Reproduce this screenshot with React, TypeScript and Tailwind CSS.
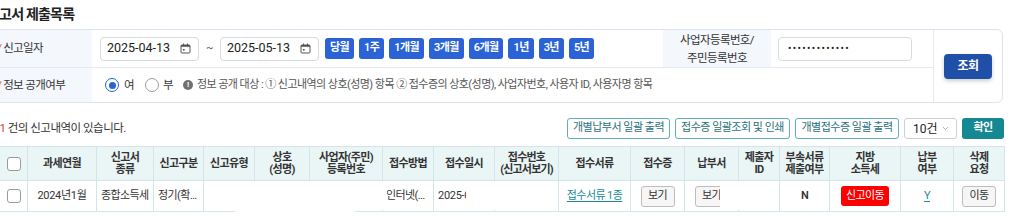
import React from "react";
import { ChevronDown } from "lucide-react";

function CalendarIcon() {
  return (
    <svg width="11" height="11" viewBox="0 0 11 11" className="shrink-0">
      <rect x="1" y="2" width="9" height="8" rx="1" fill="none" stroke="#555" strokeWidth="1" />
      <rect x="1" y="2" width="9" height="1.8" fill="#555" />
      <line x1="3.5" y1="0.5" x2="3.5" y2="2.5" stroke="#555" strokeWidth="1" />
      <line x1="7.5" y1="0.5" x2="7.5" y2="2.5" stroke="#555" strokeWidth="1" />
      <rect x="3" y="6" width="1.6" height="1.6" fill="#555" />
    </svg>
  );
}

function DateInput({ value }: { value: string }) {
  return (
    <div className="flex h-[24px] w-[99px] items-center justify-between rounded-[4px] border border-[#d6dae1] bg-white pl-[6px] pr-[7px] text-[12.5px] tracking-normal text-[#222]">
      <span>{value}</span>
      <CalendarIcon />
    </div>
  );
}

function PeriodBtn({ label }: { label: string }) {
  return (
    <button className="flex h-[21px] items-center rounded-[3px] bg-[#2b63d6] px-[5px] text-[11px] font-semibold tracking-[-0.6px] text-white">
      {label}
    </button>
  );
}

function OutlineBtn({ label, w }: { label: string; w: string }) {
  return (
    <button
      className={`flex h-[21px] items-center justify-center rounded-[3px] border border-[#5eafb7] bg-white text-[11px] tracking-[-0.5px] text-[#2c6f78] ${w}`}
    >
      {label}
    </button>
  );
}

function Checkbox() {
  return <span className="inline-block h-[14px] w-[14px] rounded-[3px] border border-[#9a9a9a] bg-white align-middle" />;
}

function GrayBtn({ label }: { label: string }) {
  return (
    <button className="inline-flex h-[21px] w-[34px] items-center justify-center rounded-[3px] border border-[#bdbdbd] bg-[#f6f6f6] text-[11px] text-[#333]">
      {label}
    </button>
  );
}

export default function App() {
  const th = "border border-[#d3e5e8] p-0 text-center font-bold text-[#333] leading-[12px]";
  const td = "border border-[#d3e5e8] p-0 text-center text-[#333]";
  return (
    <div className="h-[220px] w-[1024px] overflow-hidden bg-white font-['Roboto','Noto_Sans_CJK_KR',sans-serif] text-[11px] tracking-[-0.6px] text-[#333]">
      <div className="-ml-[13px] w-[1017px]">
        {/* Title */}
        <div className="flex h-[29px] items-center text-[14px] font-bold tracking-[-0.8px] text-[#222]">신고서 제출목록</div>

        {/* Search box */}
        <div className="flex h-[74px] w-[1016px] rounded-[6px] border border-[#dde4ef]">
          <div className="flex flex-1 flex-col">
            <div className="flex h-[39px] border-b border-[#e4e9f2]">
              <div className="flex w-[104px] items-center rounded-tl-[5px] bg-[#f4f7fc] pl-[9px]">
                <span className="mr-[2px] text-[#e5485d]">*</span>
                <span className="text-[11.5px] text-[#333]">신고일자</span>
              </div>
              <div className="flex w-[571px] items-center pl-[8px]">
                <DateInput value="2025-04-13" />
                <span className="mx-[6px] w-[9px] text-center text-[#555]">~</span>
                <DateInput value="2025-05-13" />
                <div className="ml-[6px] flex gap-[5px]">
                  <PeriodBtn label="당월" />
                  <PeriodBtn label="1주" />
                  <PeriodBtn label="1개월" />
                  <PeriodBtn label="3개월" />
                  <PeriodBtn label="6개월" />
                  <PeriodBtn label="1년" />
                  <PeriodBtn label="3년" />
                  <PeriodBtn label="5년" />
                </div>
              </div>
              <div className="flex w-[108px] items-center justify-center bg-[#f4f7fc] text-center text-[11.5px] leading-[18px] text-[#333]">
                사업자등록번호/
                <br />
                주민등록번호
              </div>
              <div className="flex w-[162px] items-center pl-[7px]">
                <div className="flex h-[24px] w-[134px] items-center rounded-[4px] border border-[#d6dae1] bg-white pl-[9px] text-[10px] tracking-[1.4px] text-[#222]">
                  •••••••••••••
                </div>
              </div>
            </div>
            <div className="flex h-[34px]">
              <div className="flex w-[104px] items-center rounded-bl-[5px] bg-[#f4f7fc] pl-[9px]">
                <span className="mr-[2px] text-[#e5485d]">*</span>
                <span className="text-[11.5px] text-[#333]">정보 공개여부</span>
              </div>
              <div className="flex flex-1 items-center pl-[13px]">
                <span className="flex h-[14px] w-[14px] items-center justify-center rounded-full border border-[#2b63d6] bg-white">
                  <span className="h-[7px] w-[7px] rounded-full bg-[#2b63d6]" />
                </span>
                <span className="ml-[5px] text-[11.5px]">여</span>
                <span className="ml-[11px] h-[14px] w-[14px] rounded-full border border-[#9c9c9c] bg-white" />
                <span className="ml-[4px] text-[11.5px]">부</span>
                <span className="ml-[10px] flex h-[10px] w-[10px] items-center justify-center rounded-full bg-[#707070] text-[8px] font-bold leading-none tracking-normal text-white">
                  !
                </span>
                <span className="ml-[4px] tracking-[-0.55px] text-[#555]">
                  정보 공개 대상 : ① 신고내역의 상호(성명) 항목 ② 접수증의 상호(성명), 사업자번호, 사용자 ID, 사용자명 항목
                </span>
              </div>
            </div>
          </div>
          <div className="flex w-[70px] items-center justify-center border-l border-[#e4e9f2]">
            <button className="flex h-[25px] w-[48px] items-center justify-center rounded-[4px] bg-[#1f4fa6] text-[12px] font-semibold text-white shadow-[0_2px_4px_rgba(0,0,0,0.2)]">
              조회
            </button>
          </div>
        </div>

        {/* Result bar */}
        <div className="mt-[15px] flex h-[21px] items-center justify-between">
          <div className="text-[11.5px] tracking-[-0.5px] text-[#333]">
            총 <span className="text-[#e53935]">1</span> 건의 신고내역이 있습니다.
          </div>
          <div className="flex items-center gap-[5px]">
            <OutlineBtn label="개별납부서 일괄 출력" w="w-[103px]" />
            <OutlineBtn label="접수증 일괄조회 및 인쇄" w="w-[115px]" />
            <OutlineBtn label="개별접수증 일괄 출력" w="w-[104px]" />
            <div className="flex h-[21px] w-[53px] items-center justify-between rounded-[3px] border border-[#cfcfcf] bg-white pl-[8px] pr-[6px] text-[12px] tracking-normal text-[#222]">
              <span>10건</span>
              <ChevronDown size={9} color="#888" strokeWidth={2} />
            </div>
            <button className="flex h-[21px] w-[42px] items-center justify-center rounded-[3px] bg-[#148893] text-[11px] font-semibold text-white">
              확인
            </button>
          </div>
        </div>

        {/* Table */}
        <div className="relative mt-[7px]">
          <table className="w-[1017px] table-fixed border-collapse">
            <colgroup>
              <col className="w-[40px]" />
              <col className="w-[69px]" />
              <col className="w-[57px]" />
              <col className="w-[50px]" />
              <col className="w-[51px]" />
              <col className="w-[55px]" />
              <col className="w-[73px]" />
              <col className="w-[51px]" />
              <col className="w-[61px]" />
              <col className="w-[64px]" />
              <col className="w-[72px]" />
              <col className="w-[54px]" />
              <col className="w-[54px]" />
              <col className="w-[41px]" />
              <col className="w-[50px]" />
              <col className="w-[71px]" />
              <col className="w-[53px]" />
              <col className="w-[51px]" />
            </colgroup>
            <thead>
              <tr className="h-[34px] bg-[#eaf5f6]">
                <th className={th}>
                  <span className="ml-[13px] inline-block align-middle">
                    <Checkbox />
                  </span>
                </th>
                <th className={th}>과세연월</th>
                <th className={th}>
                  신고서
                  <br />
                  종류
                </th>
                <th className={th}>신고구분</th>
                <th className={th}>신고유형</th>
                <th className={th}>
                  상호
                  <br />
                  (성명)
                </th>
                <th className={th}>
                  사업자(주민)
                  <br />
                  등록번호
                </th>
                <th className={th}>접수방법</th>
                <th className={th}>접수일시</th>
                <th className={`${th} tracking-[-0.8px]`}>
                  접수번호
                  <br />
                  (신고서보기)
                </th>
                <th className={th}>접수서류</th>
                <th className={th}>접수증</th>
                <th className={th}>납부서</th>
                <th className={th}>
                  제출자
                  <br />
                  ID
                </th>
                <th className={th}>
                  부속서류
                  <br />
                  제출여부
                </th>
                <th className={th}>
                  지방
                  <br />
                  소득세
                </th>
                <th className={th}>
                  납부
                  <br />
                  여부
                </th>
                <th className={th}>
                  삭제
                  <br />
                  요청
                </th>
              </tr>
            </thead>
            <tbody>
              <tr className="h-[31px] bg-white">
                <td className={td}>
                  <span className="ml-[13px] inline-block align-middle">
                    <Checkbox />
                  </span>
                </td>
                <td className={`${td} tracking-[-0.3px]`}>2024년1월</td>
                <td className={`${td} truncate px-[4px] text-left`}>종합소득세</td>
                <td className={`${td} truncate px-[4px] text-left`}>정기(확정)</td>
                <td className={td}></td>
                <td className={td}></td>
                <td className={td}></td>
                <td className={`${td} truncate px-[3px] text-left`}>인터넷(홈택스)</td>
                <td className={`${td} truncate px-[4px] text-left tracking-[-0.3px]`}>2025-05-13 10:21</td>
                <td className={td}></td>
                <td className={td}>
                  <span className="text-[#1b8c9a] underline underline-offset-2">접수서류 1종</span>
                </td>
                <td className={td}>
                  <GrayBtn label="보기" />
                </td>
                <td className={td}>
                  <GrayBtn label="보기" />
                </td>
                <td className={td}></td>
                <td className={`${td} font-semibold`}>N</td>
                <td className={td}>
                  <button className="inline-flex h-[20px] w-[48px] items-center justify-center rounded-[3px] bg-[#ff0000] text-[11px] text-white">
                    신고이동
                  </button>
                </td>
                <td className={td}>
                  <span className="text-[#1b8c9a] underline underline-offset-2">Y</span>
                </td>
                <td className={td}>
                  <GrayBtn label="이동" />
                </td>
              </tr>
            </tbody>
          </table>
          {/* redaction overlays */}
          <div className="absolute left-[218px] top-[35px] h-[29px] w-[182px] bg-white" />
          <div className="absolute left-[248px] top-[63px] h-[4px] w-[120px] bg-white" />
          <div className="absolute left-[479px] top-[35px] h-[29px] w-[90px] bg-white" />
          <div className="absolute left-[733px] top-[35px] h-[29px] w-[58px] bg-white" />
        </div>
      </div>
    </div>
  );
}
